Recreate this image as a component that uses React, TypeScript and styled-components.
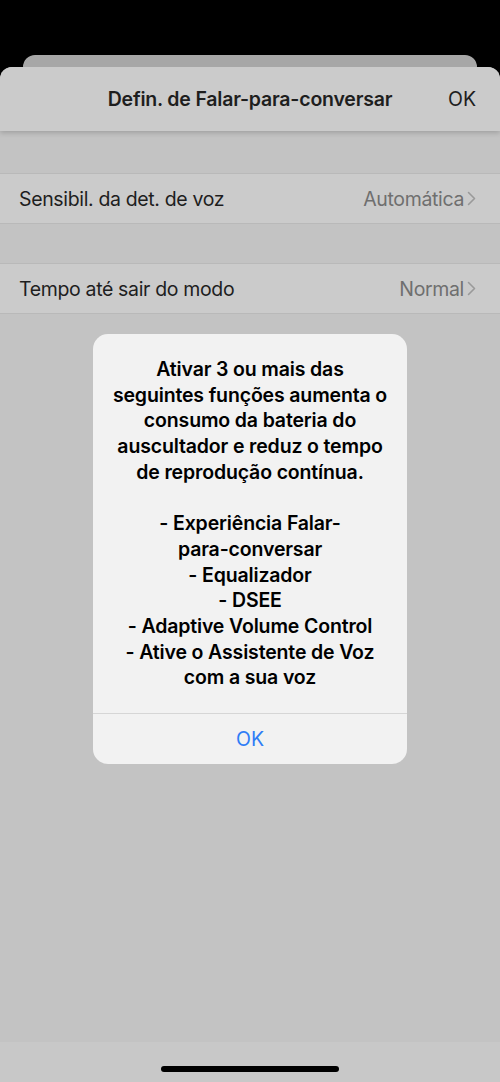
import React from "react";
import styled, { createGlobalStyle } from "styled-components";

const Global = createGlobalStyle`
  html, body { margin: 0; padding: 0; background: #000; }
  body { font-family: Inter, "Noto Sans", "Liberation Sans", sans-serif; -webkit-font-smoothing: antialiased; }
  * { box-sizing: border-box; }
`;

const Screen = styled.div`
  position: relative;
  width: 500px;
  height: 1082px;
  background: #000;
  display: flex;
  flex-direction: column;
  padding-top: 55px;
  overflow: hidden;
`;

const BackCard = styled.div`
  height: 12px;
  margin: 0 23px;
  background: #a7a7a7;
  border-radius: 12px 12px 0 0;
`;

const Sheet = styled.div`
  flex: 1;
  display: flex;
  flex-direction: column;
  background: #c3c3c3;
  border-radius: 12px 12px 0 0;
  overflow: hidden;
`;

const NavBar = styled.div`
  position: relative;
  z-index: 1;
  height: 64px;
  display: grid;
  grid-template-columns: 1fr auto 1fr;
  align-items: center;
  padding: 0 24px;
  background: #cbcbcb;
  box-shadow: 0 2px 5px rgba(0, 0, 0, 0.18);
`;

const NavTitle = styled.div`
  grid-column: 2;
  font-size: 19.5px;
  font-weight: 600;
  color: #1e1e1e;
  letter-spacing: -0.2px;
`;

const NavAction = styled.div`
  grid-column: 3;
  justify-self: end;
  font-size: 19.5px;
  color: #1e1e1e;
`;

const Group = styled.div<{ $gap: number }>`
  margin-top: ${(p) => p.$gap}px;
  background: #cbcbcb;
  border-top: 1px solid #b9b9b9;
  border-bottom: 1px solid #b9b9b9;
`;

const Row = styled.div`
  height: 49px;
  display: flex;
  align-items: center;
  justify-content: space-between;
  padding: 0 24px 0 19px;
`;

const Label = styled.span`
  font-size: 19.5px;
  color: #1e1e1e;
  letter-spacing: -0.35px;
`;

const Value = styled.span`
  display: flex;
  align-items: center;
  gap: 3px;
  font-size: 19.5px;
  color: #6f6f6f;
  letter-spacing: -0.35px;
`;

const Spacer = styled.div`
  flex: 1;
`;

const HomeBar = styled.div`
  height: 40px;
  background: #c8c8c8;
  display: flex;
  justify-content: center;
  padding-top: 24px;
`;

const Indicator = styled.div`
  width: 178px;
  height: 6px;
  border-radius: 3px;
  background: #000;
`;

const Overlay = styled.div`
  position: absolute;
  inset: 0;
  display: flex;
  justify-content: center;
  align-items: flex-start;
  padding-top: 334px;
`;

const Alert = styled.div`
  width: 314px;
  background: #f2f2f2;
  border-radius: 15px;
  overflow: hidden;
  display: flex;
  flex-direction: column;
`;

const Message = styled.div`
  padding: 23px 16px 22px;
  text-align: center;
  font-size: 19.5px;
  line-height: 25.7px;
  font-weight: 600;
  color: #000;
  white-space: pre-line;
  letter-spacing: -0.15px;
`;

const AlertButton = styled.div`
  height: 51px;
  border-top: 1px solid #d6d6d6;
  display: flex;
  align-items: center;
  justify-content: center;
  font-size: 19.5px;
  color: #2f7df6;
`;

const Chevron = () => (
  <svg width="9" height="15" viewBox="0 0 9 15" fill="none">
    <path d="M1.5 1.5 L7.5 7.5 L1.5 13.5" stroke="#9a9a9a" strokeWidth="1.6" strokeLinecap="round" strokeLinejoin="round" />
  </svg>
);

const rows = [
  { label: "Sensibil. da det. de voz", value: "Automática", gap: 42 },
  { label: "Tempo até sair do modo", value: "Normal", gap: 39 },
];

const message =
  "Ativar 3 ou mais das\nseguintes funções aumenta o\nconsumo da bateria do\nauscultador e reduz o tempo\nde reprodução contínua.\n\n- Experiência Falar-\npara-conversar\n- Equalizador\n- DSEE\n- Adaptive Volume Control\n- Ative o Assistente de Voz\ncom a sua voz";

export default function App() {
  return (
    <>
      <Global />
      <Screen>
        <BackCard />
        <Sheet>
          <NavBar>
            <NavTitle>Defin. de Falar-para-conversar</NavTitle>
            <NavAction>OK</NavAction>
          </NavBar>
          {rows.map((r) => (
            <Group key={r.label} $gap={r.gap}>
              <Row>
                <Label>{r.label}</Label>
                <Value>
                  {r.value}
                  <Chevron />
                </Value>
              </Row>
            </Group>
          ))}
          <Spacer />
          <HomeBar>
            <Indicator />
          </HomeBar>
        </Sheet>
        <Overlay>
          <Alert>
            <Message>{message}</Message>
            <AlertButton>OK</AlertButton>
          </Alert>
        </Overlay>
      </Screen>
    </>
  );
}
